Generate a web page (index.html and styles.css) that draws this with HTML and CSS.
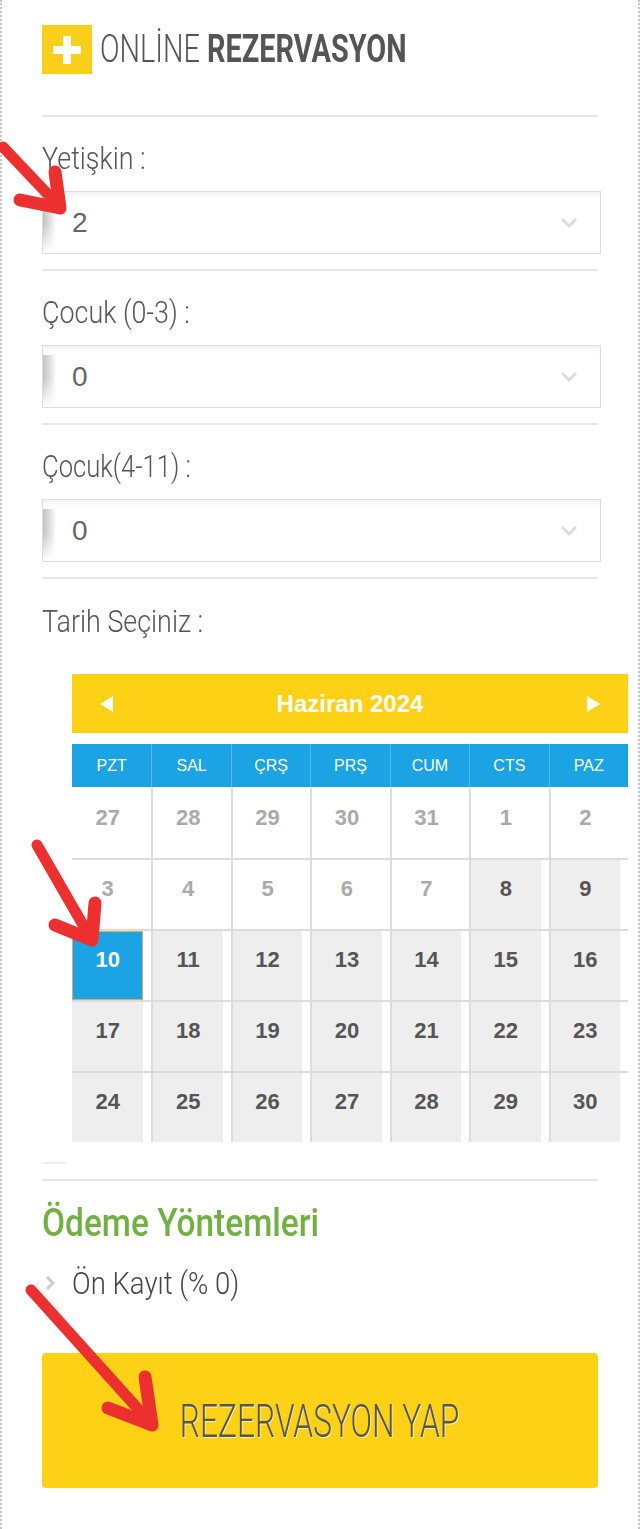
FILE: index.html
```html
<!DOCTYPE html>
<html lang="tr">
<head>
    <meta charset="UTF-8">
    <title>Online Rezervasyon</title>
    <link rel="stylesheet" href="styles.css">
</head>
<body>
<div class="page">
    <div class="box">
        <div class="head">
            <span class="plus">
                <svg width="50" height="49" viewBox="0 0 50 49"><path d="M21 11h8v10h10v8H29v10h-8V29H11v-8h10z" fill="#fff"/></svg>
            </span>
            <h2 class="title"><span>ONLİNE <b>REZERVASYON</b></span></h2>
        </div>

        <div class="row">
            <label class="lbl"><span>Yetişkin :</span></label>
            <div class="sel"><i class="bar"></i><span class="val">2</span>
                <svg class="chev" width="18" height="11" viewBox="0 0 18 11"><path d="M2 2l7 7 7-7" fill="none" stroke="#ddd" stroke-width="3"/></svg>
            </div>
        </div>
        <div class="row">
            <label class="lbl"><span>Çocuk (0-3) :</span></label>
            <div class="sel"><i class="bar"></i><span class="val">0</span>
                <svg class="chev" width="18" height="11" viewBox="0 0 18 11"><path d="M2 2l7 7 7-7" fill="none" stroke="#ddd" stroke-width="3"/></svg>
            </div>
        </div>
        <div class="row">
            <label class="lbl"><span class="tight">Çocuk(4-11) :</span></label>
            <div class="sel"><i class="bar"></i><span class="val">0</span>
                <svg class="chev" width="18" height="11" viewBox="0 0 18 11"><path d="M2 2l7 7 7-7" fill="none" stroke="#ddd" stroke-width="3"/></svg>
            </div>
        </div>

        <div class="row date">
            <label class="lbl"><span>Tarih Seçiniz :</span></label>
            <div class="cal">
                <div class="cal-head">
                    <svg width="13" height="16" viewBox="0 0 13 16"><path d="M13 0v16L0 8z" fill="#fff"/></svg>
                    <span>Haziran 2024</span>
                    <svg width="13" height="16" viewBox="0 0 13 16"><path d="M0 0v16l13-8z" fill="#fff"/></svg>
                </div>
                <div class="cal-week">
                    <span>PZT</span><span>SAL</span><span>ÇRŞ</span><span>PRŞ</span><span>CUM</span><span>CTS</span><span>PAZ</span>
                </div>
                <div class="cal-days">
                    <span class="off"><b>27</b></span><span class="off"><b>28</b></span><span class="off"><b>29</b></span><span class="off"><b>30</b></span><span class="off"><b>31</b></span><span class="off"><b>1</b></span><span class="off"><b>2</b></span>
                    <span class="off"><b>3</b></span><span class="off"><b>4</b></span><span class="off"><b>5</b></span><span class="off"><b>6</b></span><span class="off"><b>7</b></span><span><b>8</b></span><span><b>9</b></span>
                    <span class="now"><b>10</b></span><span><b>11</b></span><span><b>12</b></span><span><b>13</b></span><span><b>14</b></span><span><b>15</b></span><span><b>16</b></span>
                    <span><b>17</b></span><span><b>18</b></span><span><b>19</b></span><span><b>20</b></span><span><b>21</b></span><span><b>22</b></span><span><b>23</b></span>
                    <span><b>24</b></span><span><b>25</b></span><span><b>26</b></span><span><b>27</b></span><span><b>28</b></span><span><b>29</b></span><span><b>30</b></span>
                </div>
            </div>
            <i class="stub"></i>
        </div>

        <h3 class="pay"><span>Ödeme Yöntemleri</span></h3>
        <div class="opt">
            <svg width="10" height="16" viewBox="0 0 10 16"><path d="M2 2l6 6-6 6" fill="none" stroke="#ccc" stroke-width="3"/></svg>
            <span>Ön Kayıt (% 0)</span>
        </div>
        <button class="btn"><span>REZERVASYON YAP</span></button>
    </div>

    <!-- isaret oklari -->
    <svg class="arrows" width="640" height="1529" viewBox="0 0 640 1529">
        <g fill="none" stroke="#ec2f2f" stroke-linecap="round" stroke-linejoin="round">
            <path d="M3 147L57 204" stroke-width="11"/>
            <path d="M55 172L60 208L20 200" stroke-width="13"/>
            <path d="M37 845L90 937" stroke-width="11"/>
            <path d="M95 903L92 940L55 925" stroke-width="13"/>
            <path d="M31 1290L148 1420" stroke-width="11"/>
            <path d="M145 1377L152 1425L108 1408" stroke-width="13"/>
        </g>
    </svg>
</div>
</body>
</html>
```

FILE: styles.css
```css
*{margin:0;padding:0;box-sizing:border-box;}
body{
    background:#fff;
    font-family:Roboto,"Liberation Sans",sans-serif;
    color:#555;
}
.page{
    position:relative;
    width:640px;
    height:1529px;
}
.box{
    height:1529px;
    border-left:2px dotted #c4c4c4;
    border-right:2px dotted #c4c4c4;
    padding:24px 40px 0;
}
.head{
    display:flex;
    align-items:center;
    gap:8px;
    padding-bottom:41px;
    border-bottom:2px solid #e6e6e6;
}
.plus{
    display:block;
    width:50px;
    height:49px;
    background:#f9cf1c;
}
.plus svg{display:block;}
.title{
    font-size:38px;
    font-weight:300;
    line-height:50px;
    color:#555;
    white-space:nowrap;
}
.title span{
    display:inline-block;
    transform:scaleX(.76);
    transform-origin:0 50%;
}
.title b{font-weight:700;}

.row{
    padding:21px 0 15px;
    border-bottom:2px solid #e6e6e6;
}
.lbl{
    display:block;
    height:40px;
    line-height:40px;
    font-size:32px;
    font-weight:300;
    color:#555;
    margin-bottom:13px;
    white-space:nowrap;
}
.lbl span{
    display:inline-block;
    transform:scaleX(.84);
    transform-origin:0 50%;
}
.lbl span.tight{transform:scaleX(.8);}
.sel{
    display:flex;
    align-items:center;
    height:63px;
    margin-right:-3px;
    border:1px solid #dcdcdc;
    box-shadow:inset 0 5px 6px -3px rgba(0,0,0,.07);
}
.sel .bar{
    align-self:stretch;
    width:13px;
    margin-top:9px;
    background:linear-gradient(to right,#c2c2c2,#e9e9e9 70%,#fff);
    -webkit-mask-image:linear-gradient(to bottom,#000 45%,transparent);
}
.sel .val{
    margin-left:16px;
    font-family:"Liberation Sans",Arial,sans-serif;
    font-size:28px;
    color:#666;
}
.sel .chev{
    margin-left:auto;
    margin-right:22px;
}

.row.date{
    padding:22px 0 0;
}
.cal{
    width:556px;
    margin-left:30px;
    margin-top:33px;
    font-family:"Liberation Sans",Arial,sans-serif;
}
.cal-head{
    display:flex;
    align-items:center;
    justify-content:space-between;
    height:59px;
    padding:0 28px;
    background:#fcd116;
    color:#fff;
    font-size:24px;
    font-weight:700;
}
.cal-head svg{display:block;}
.cal-week{
    display:grid;
    grid-template-columns:repeat(7,1fr);
    height:43px;
    margin-top:11px;
    background:#1ba3e3;
}
.cal-week span{
    border-left:1px solid #53bbee;
    color:#fff;
    font-size:16px;
    line-height:43px;
    text-align:center;
}
.cal-week span:first-child{border-left:0;}
.cal-days{
    display:grid;
    grid-template-columns:repeat(7,1fr);
}
.cal-days span{
    height:71px;
    border-top:2px solid #dcdcdc;
    border-left:2px solid #dcdcdc;
    padding-right:8px;
}
.cal-days span:nth-child(7n+1){border-left:0;}
.cal-days span:nth-child(-n+7){border-top-color:transparent;}
.cal-days b{
    display:block;
    height:100%;
    padding-top:12px;
    line-height:34px;
    text-align:center;
    font-size:22px;
    color:#555;
    background:#eee;
}
.cal-days .off b{
    background:#fff;
    color:#aaa;
}
.cal-days .now b{
    background:#1ba3e3;
    border:1px solid #d6b062;
    padding-top:11px;
    color:#fff;
}
.stub{
    display:block;
    width:24px;
    height:2px;
    margin:20px 0 15px;
    background:#f0f0f0;
}

.pay{
    margin-top:22px;
    height:40px;
    line-height:40px;
    font-size:38px;
    font-weight:500;
    color:#72b043;
    white-space:nowrap;
}
.pay span{
    display:inline-block;
    transform:scaleX(.88);
    transform-origin:0 50%;
}
.opt{
    display:flex;
    align-items:center;
    margin-top:20px;
    height:40px;
    font-size:32px;
    font-weight:300;
    color:#444;
    white-space:nowrap;
}
.opt svg{
    margin:0 17px 0 3px;
}
.opt span{
    display:inline-block;
    transform:scaleX(.86);
    transform-origin:0 50%;
}
.btn{
    display:block;
    width:100%;
    height:135px;
    margin-top:50px;
    border:0;
    border-radius:4px;
    background:#fcd116;
    font-family:Roboto,"Liberation Sans",sans-serif;
    font-size:46px;
    font-weight:300;
    color:#555;
    text-shadow:1px 1px 0 rgba(255,255,255,.7);
}
.btn span{
    display:inline-block;
    transform:scaleX(.69);
}
.arrows{
    position:absolute;
    top:0;
    left:0;
    pointer-events:none;
}
```
